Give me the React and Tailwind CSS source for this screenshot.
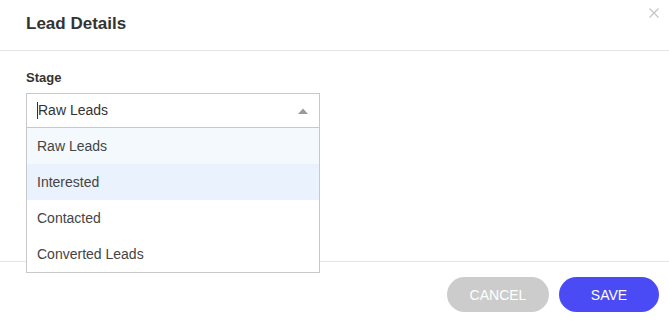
import React from 'react';

const stages = ['Raw Leads', 'Interested', 'Contacted', 'Converted Leads'];

export default function App() {
  const selected = 'Raw Leads';
  const hovered = 'Interested';

  return (
    <div className="h-[324px] w-[669px] bg-white flex flex-col font-['Liberation_Sans',Arial,sans-serif] text-[#333] overflow-hidden">
      <div className="h-[51px] shrink-0 border-b border-[#e6e6e6] relative flex items-center px-[26px]">
        <h2 className="text-[17px] font-bold text-[#333] leading-none -mt-[3px]">Lead Details</h2>
        <button className="absolute right-[9px] top-[7px] text-[#c4c4c4]" aria-label="Close">
          <svg width="12" height="12" viewBox="0 0 12 12" fill="none" stroke="currentColor" strokeWidth="1.2">
            <path d="M1.5 1.5l9 9M10.5 1.5l-9 9" />
          </svg>
        </button>
      </div>

      <div className="h-[210px] shrink-0 px-[26px] pt-[19px] relative">
        <label className="block text-[13px] font-bold leading-[16px] text-[#333] mb-[7px]">Stage</label>
        <div className="relative w-[294px] z-10">
          <div className="h-[35px] border border-[#c8c8c8] flex items-center pl-[10px] pr-[11px] bg-white">
            <span className="w-px h-[17px] bg-[#333]" />
            <span className="text-[14px] text-[#333] flex-1">{selected}</span>
            <svg width="10" height="6" viewBox="0 0 10 6">
              <polygon points="0,6 5,0.5 10,6" fill="#9a9a9a" />
            </svg>
          </div>
          <ul className="absolute left-0 right-0 top-[35px] border border-t-0 border-[#c8c8c8] bg-white">
            {stages.map((s) => (
              <li key={s} className={itemClass(s, selected, hovered)}>
                {s}
              </li>
            ))}
          </ul>
        </div>
      </div>

      <div className="flex-1 border-t border-[#e6e6e6] flex justify-end gap-[10px] pt-[15px] pr-[10px]">
        <button className="h-[35px] w-[102px] pt-[2px] rounded-full bg-[#cccccc] text-white text-[14px] uppercase">Cancel</button>
        <button className="h-[35px] w-[100px] pt-[2px] rounded-full bg-[#4b4bf6] text-white text-[14px] uppercase">Save</button>
      </div>
    </div>
  );
}

function itemClass(s, selected, hovered) {
  if (s === hovered) return 'h-[36px] flex items-center px-[10px] text-[14px] text-[#444] bg-[#eaf2fd]';
  if (s === selected) return 'h-[36px] flex items-center px-[10px] text-[14px] text-[#444] bg-[#f4f9fe]';
  return 'h-[36px] flex items-center px-[10px] text-[14px] text-[#444] bg-white';
}
